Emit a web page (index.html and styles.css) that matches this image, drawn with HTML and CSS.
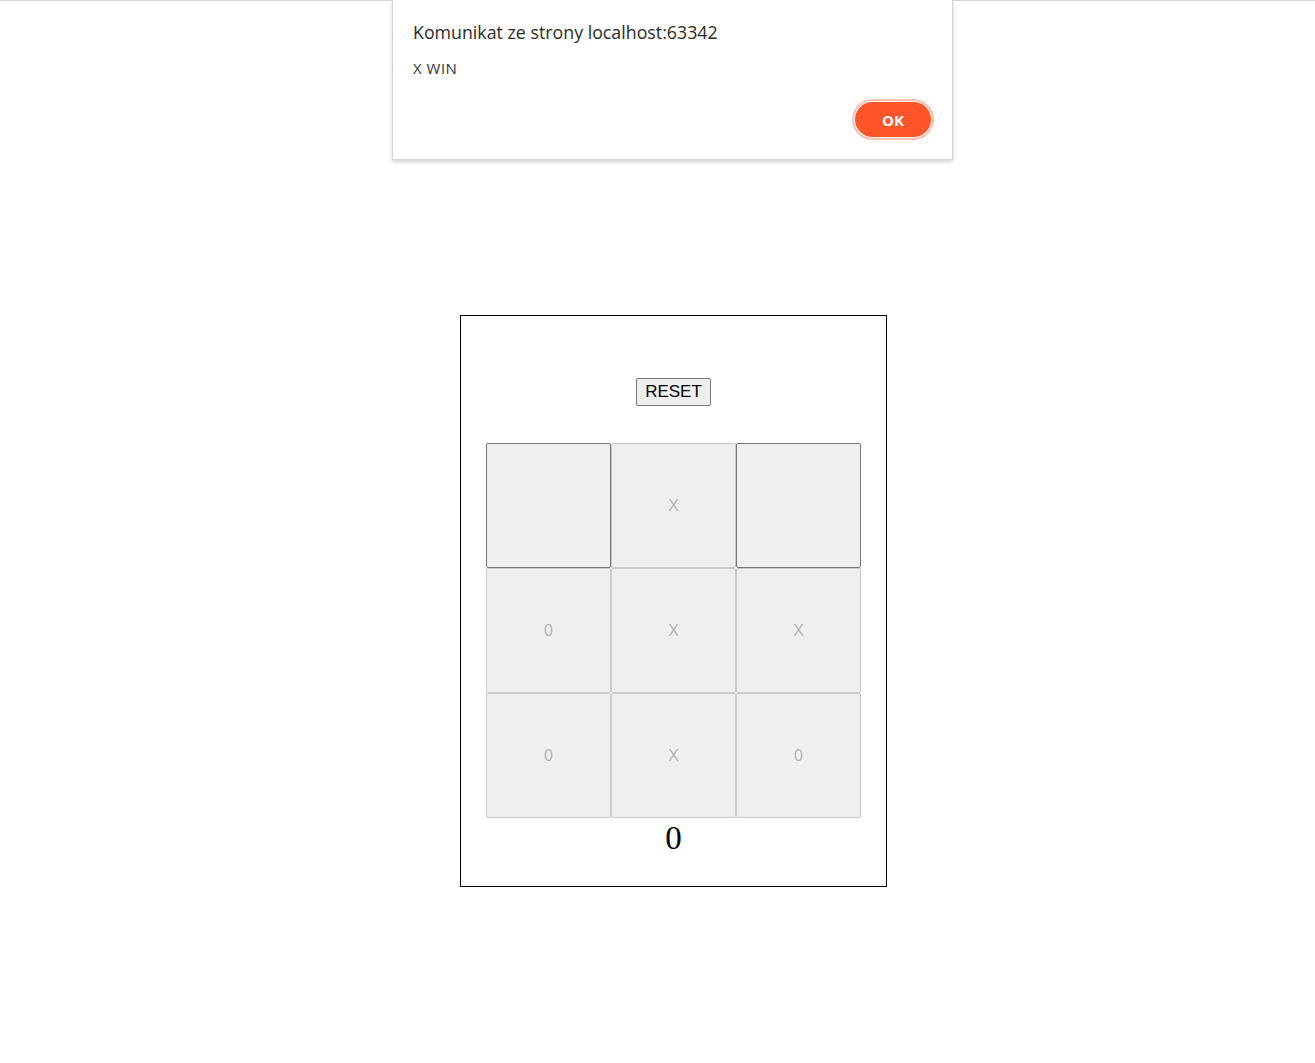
FILE: index.html
```html
<!DOCTYPE html>
<html lang="pl">
<head>
<meta charset="utf-8">
<title>Kółko i krzyżyk</title>
<link rel="stylesheet" href="styles.css">
</head>
<body>
<div class="topline"></div>
<main class="page">
  <div class="game">
    <div class="controls">
      <button class="reset" type="button">RESET</button>
    </div>
    <div class="board">
      <button class="cell" type="button"></button>
      <button class="cell" type="button" disabled>X</button>
      <button class="cell" type="button"></button>
      <button class="cell" type="button" disabled>0</button>
      <button class="cell" type="button" disabled>X</button>
      <button class="cell" type="button" disabled>X</button>
      <button class="cell" type="button" disabled>0</button>
      <button class="cell" type="button" disabled>X</button>
      <button class="cell" type="button" disabled>0</button>
    </div>
    <div class="score">0</div>
  </div>
</main>
<div class="dialog" role="alertdialog">
  <div class="dialog-title">Komunikat ze strony localhost:63342</div>
  <div class="dialog-msg">X WIN</div>
  <div class="dialog-actions">
    <button class="ok" type="button">OK</button>
  </div>
</div>
</body>
</html>
```
FILE: styles.css
```css
html, body {
  margin: 0;
  padding: 0;
  background: #ffffff;
}

body {
  font-family: "Liberation Serif", serif;
}

.topline {
  height: 1px;
  background: #d6d6d6;
}

.page {
  padding-top: 314px;
  padding-left: 460px;
}

.game {
  width: 375px;
  border: 1px solid #000000;
  padding: 62px 25px 29px 25px;
}

.controls {
  display: flex;
  justify-content: center;
  margin-bottom: 37px;
}

.reset {
  font-family: "Liberation Sans", Arial, sans-serif;
  font-size: 17px;
  color: #000000;
  background: #efefef;
  border: 1px solid #767676;
  border-radius: 2px;
  height: 28px;
  width: 75px;
  padding: 0;
  margin: 0;
  line-height: 26px;
}

.board {
  display: grid;
  grid-template-columns: repeat(3, 125px);
  grid-template-rows: repeat(3, 125px);
}

.cell {
  margin: 0;
  padding: 0;
  width: 125px;
  height: 125px;
  background: #efefef;
  border: 1px solid #767676;
  border-radius: 2px;
  font-family: "Liberation Sans", Arial, sans-serif;
  font-size: 16px;
  color: #101010;
}

.cell:disabled {
  border-color: rgba(118, 118, 118, 0.3);
  color: rgba(16, 16, 16, 0.3);
}

.score {
  font-family: "Liberation Serif", serif;
  font-size: 33px;
  line-height: 37px;
  padding-top: 2px;
  text-align: center;
  color: #000000;
}

.dialog {
  position: absolute;
  top: 0;
  left: 392px;
  width: 561px;
  height: 160px;
  box-sizing: border-box;
  background: #ffffff;
  border: 1px solid #d4d4d4;
  border-top: none;
  box-shadow: 0 2px 4px rgba(0, 0, 0, 0.18);
  padding: 19px 20px 0 20px;
  font-family: "Open Sans", "Noto Sans", sans-serif;
  color: #2b2b2b;
}

.dialog-title {
  font-size: 17.8px;
  line-height: 26px;
}

.dialog-msg {
  font-size: 15px;
  line-height: 20px;
  margin-top: 13px;
  letter-spacing: 0.5px;
  color: #333333;
}

.dialog-actions {
  display: flex;
  justify-content: flex-end;
  margin-top: 24px;
  padding-right: 1px;
}

.ok {
  width: 76px;
  height: 35px;
  border-radius: 18px;
  border: none;
  background: #ff5528;
  color: #ffffff;
  font-family: "Open Sans", "Noto Sans", sans-serif;
  font-weight: 700;
  font-size: 15px;
  padding: 0;
  box-shadow: 0 0 0 1px #ffffff, 0 0 0 3px #ffbfae;
}
```
